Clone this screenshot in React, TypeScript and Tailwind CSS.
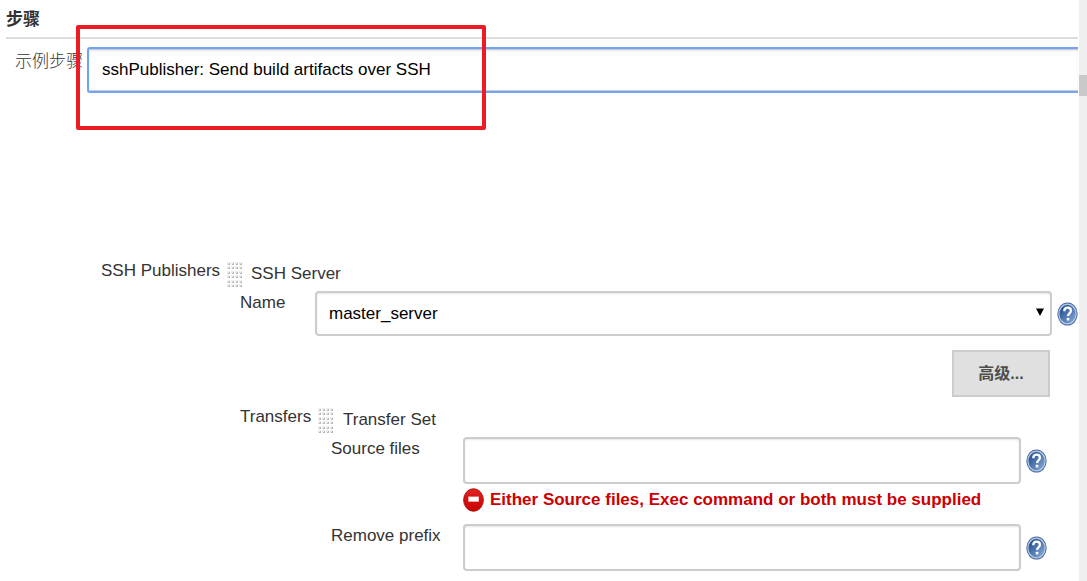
import React from "react";

const COLUMNS = [0, 4, 8, 12];
const ROWS = [0, 4, 9, 13, 18, 22];

function DragHandle() {
  return (
    <svg className="h-[26px] w-4 shrink-0" viewBox="0 0 16 26" aria-hidden="true">
      {ROWS.map((y) =>
        COLUMNS.map((x) => (
          <g key={`${x}-${y}`}>
            <rect x={x} y={y} width="3" height="3" fill="#ececec" />
            <path d={`M${x + 3} ${y + 1}v2h-2v-1h1v-1z`} fill="#b8b8b4" />
          </g>
        )),
      )}
    </svg>
  );
}

function HelpButton({ topic }: { topic: string }) {
  return (
    <button type="button" aria-label={`Help for ${topic}`} className="shrink-0">
      <svg className="h-6 w-[21px]" viewBox="0 0 21 24" preserveAspectRatio="none" aria-hidden="true">
        <defs>
          <linearGradient id="help-fill" x1="0" y1="0" x2="1" y2="1">
            <stop offset="0.2" stopColor="#2b5594" />
            <stop offset="1" stopColor="#8fb2de" />
          </linearGradient>
        </defs>
        <ellipse cx="10.5" cy="12" rx="10.2" ry="11.6" fill="#4a6c9f" />
        <ellipse cx="10.5" cy="12" rx="8.6" ry="9.9" fill="url(#help-fill)" stroke="#b9cce6" strokeWidth="1.2" />
        <path
          d="M7.3 9.2C7.3 6.8 8.7 5.7 10.6 5.7s3.3 1.1 3.3 3c0 2.4-2.8 2.8-2.8 5.4"
          fill="none"
          stroke="#fff"
          strokeWidth="2.3"
        />
        <rect x="9.8" y="15.7" width="2.5" height="2.7" rx="0.6" fill="#fff" />
      </svg>
    </button>
  );
}

function ErrorIcon() {
  return (
    <svg className="h-6 w-[21px] shrink-0" viewBox="0 0 21 24" preserveAspectRatio="none" aria-hidden="true">
      <defs>
        <linearGradient id="error-fill" x1="0" y1="0" x2="0" y2="1">
          <stop offset="0" stopColor="#e2231f" />
          <stop offset="0.6" stopColor="#d60c0c" />
          <stop offset="1" stopColor="#c40808" />
        </linearGradient>
      </defs>
      <ellipse cx="10.5" cy="12" rx="9.9" ry="11.3" fill="url(#error-fill)" stroke="#a81212" strokeWidth="0.9" />
      <rect x="5.4" y="8.8" width="10.4" height="4.8" fill="#fff" stroke="#f3a5a5" strokeWidth="0.4" />
    </svg>
  );
}

const fieldClass =
  "min-w-0 flex-1 appearance-none rounded-[4px] border-2 border-[#cccccc] bg-white px-3 text-black shadow-[inset_0_1px_2px_rgba(0,0,0,0.1)] outline-none";

function TextRow({ id, label }: { id: string; label: string }) {
  return (
    <div className="flex items-start">
      <label htmlFor={id} className="w-[132px] shrink-0">
        {label}
      </label>
      <div className="flex min-w-0 flex-1 items-center gap-[5px]">
        <input id={id} type="text" className={`h-[47px] ${fieldClass}`} />
        <HelpButton topic={label} />
      </div>
    </div>
  );
}

export default function App() {
  return (
    <div className="flex min-h-screen bg-white font-['Liberation_Sans','Noto_Sans_CJK_SC',sans-serif] text-[17px] leading-6 text-[#333333]">
      <main className="relative min-w-0 flex-1 pr-px pl-1.5">
        <h2 className="border-b-2 border-[#dddddd] pt-2 pb-[5px] font-bold">步骤</h2>

        <div className="mt-2 flex items-start pl-[9px]">
          <label htmlFor="step" className="w-[72px] shrink-0 pt-[3px] font-light whitespace-nowrap">
            示例步骤
          </label>
          <div className="flex min-w-0 flex-1 rounded-l-[3px] border-y-2 border-l-2 border-[#6ea3f5]">
            <select
              id="step"
              className="h-[42px] w-full appearance-none border-y border-[#cccccc] bg-white px-[13px] text-black shadow-[inset_0_1px_2px_rgba(0,0,0,0.1)] outline-none"
            >
              <option>sshPublisher: Send build artifacts over SSH</option>
            </select>
          </div>
        </div>

        <div
          aria-hidden="true"
          className="pointer-events-none absolute top-[25px] left-[76px] h-[105px] w-[410px] rounded-[2px] border-4 border-[#ed1c24]"
        />

        <section className="mt-[166px] flex items-start pl-[95px]">
          <h3 className="w-[126px] shrink-0 whitespace-nowrap">SSH Publishers</h3>
          <div className="min-w-0 flex-1 pt-[3px]">
            <div className="flex items-start gap-2">
              <DragHandle />
              <span>SSH Server</span>
            </div>

            <div className="mt-[3px] flex items-start pl-[13px]">
              <label htmlFor="server" className="w-[75px] shrink-0">
                Name
              </label>
              <div className="flex min-w-0 flex-1 items-center gap-[5px]">
                <div className="relative flex min-w-0 flex-1">
                  <select id="server" className={`h-[45px] ${fieldClass}`}>
                    <option>master_server</option>
                  </select>
                  <svg
                    className="pointer-events-none absolute top-[17px] right-2 h-2 w-2"
                    viewBox="0 0 9 9"
                    aria-hidden="true"
                  >
                    <path d="M0 0.5h9L4.5 9z" fill="#000" />
                  </svg>
                </div>
                <HelpButton topic="Name" />
              </div>
            </div>

            <div className="mt-3.5 flex justify-end pr-7">
              <button
                type="button"
                className="h-[47px] w-[98px] border-2 border-[#cccccc] bg-[#e0e0e0] text-[16px] font-bold text-[#4d4d4d]"
              >
                高级...
              </button>
            </div>

            <div className="mt-2 flex items-start pr-[31px] pl-[13px]">
              <h4 className="w-[78px] shrink-0">Transfers</h4>
              <div className="min-w-0 flex-1 pt-[3px]">
                <div className="flex items-start gap-[9px]">
                  <DragHandle />
                  <span>Transfer Set</span>
                </div>
                <div className="mt-[3px] pl-[13px]">
                  <TextRow id="source-files" label="Source files" />
                  <p className="mt-1 mb-3 ml-[132px] flex items-center gap-1.5 font-bold whitespace-nowrap text-[#cc0000]">
                    <ErrorIcon />
                    Either Source files, Exec command or both must be supplied
                  </p>
                  <TextRow id="remove-prefix" label="Remove prefix" />
                </div>
              </div>
            </div>
          </div>
        </section>
      </main>

      <div aria-hidden="true" className="w-2 shrink-0 bg-[#efefef] pt-[75px]">
        <div className="h-[21px] bg-[#c9c9c9]" />
      </div>
    </div>
  );
}
